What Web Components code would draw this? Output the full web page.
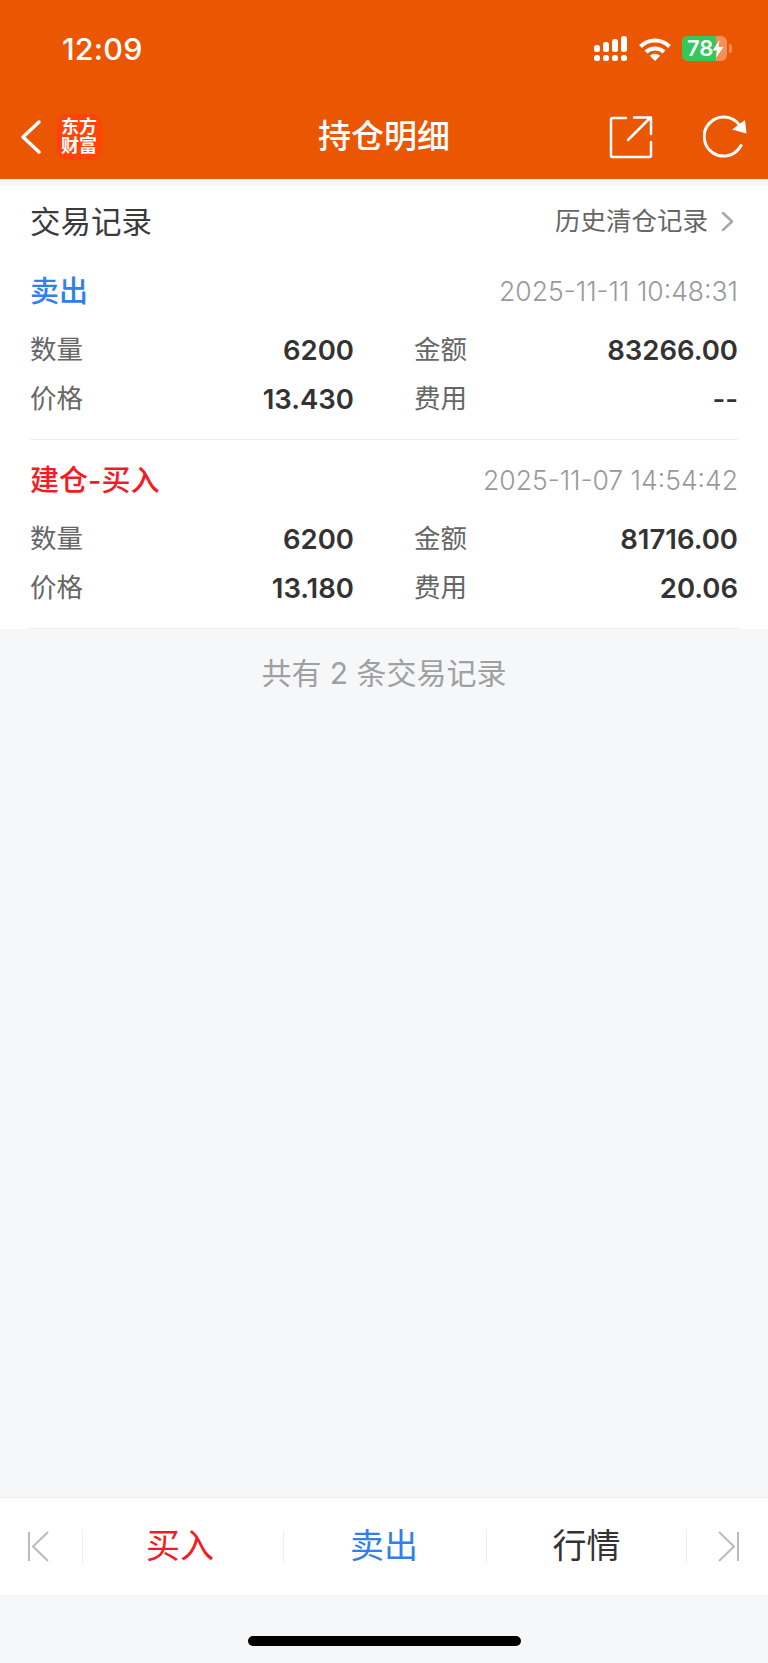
<!DOCTYPE html>
<html lang="zh">
<head>
<meta charset="utf-8">
<title>持仓明细</title>
<style>
html,body{margin:0;padding:0;}
body{width:768px;height:1663px;overflow:hidden;background:#f6f7f9;font-family:Inter,"Noto Sans CJK SC",sans-serif;}
app-page{height:1663px;}
</style>
</head>
<body>
<app-page>
	<app-header slot="header"></app-header>
	<trade-panel>
		<trade-item kind="sell" label="卖出" time="2025-11-11 10:48:31" qty="6200" amount="83266.00" price="13.430" fee="--"></trade-item>
		<trade-item kind="buy" label="建仓-买入" time="2025-11-07 14:54:42" qty="6200" amount="81716.00" price="13.180" fee="20.06"></trade-item>
	</trade-panel>
	<p class="count" slot="count">共有 2 条交易记录</p>
	<action-bar slot="bar"></action-bar>
</app-page>
<script>
const FONT = 'Inter,"Noto Sans CJK SC",sans-serif';
const CJK = '"Noto Sans CJK SC",sans-serif';

class AppPage extends HTMLElement{
	constructor(){
		super();
		let shadow = this.attachShadow({mode: 'open'});
		shadow.innerHTML = /*html*/`
		<style>
			:host{display:flex;flex-direction:column;background:#f6f7f9;font-family:${FONT};}
			.body{flex:1;padding-top:7px;}
			.home{height:68px;display:flex;justify-content:center;padding-top:41px;box-sizing:border-box;}
			.home i{display:block;width:273px;height:10px;border-radius:5px;background:#000;}
			::slotted(p){margin:0;height:84px;display:flex;align-items:center;justify-content:center;font:400 30px ${FONT};color:#a0a0a0;}
		</style>
		<slot name="header"></slot>
		<div class="body"><slot></slot><slot name="count"></slot></div>
		<slot name="bar"></slot>
		<div class="home"><i></i></div>`;
	}
}
customElements.define('app-page', AppPage);

class AppHeader extends HTMLElement{
	constructor(){
		super();
		let shadow = this.attachShadow({mode: 'open'});
		shadow.innerHTML = /*html*/`
		<style>
			:host{display:block;background:#eb5603;color:#fff;height:179px;font-family:${FONT};}
			.status{height:94px;display:flex;align-items:center;justify-content:space-between;padding:0 36px 0 62px;box-sizing:border-box;}
			.time{font:500 30.500px Inter,sans-serif;letter-spacing:.2px;padding-top:2px;}
			.icons{display:flex;align-items:center;gap:11px;padding-top:3px;}
			.nav{height:85px;display:flex;align-items:center;justify-content:space-between;padding:0 21px 0 20px;box-sizing:border-box;position:relative;}
			.left{display:flex;align-items:center;gap:14px;}
			.logo{width:46px;height:46px;border-radius:11px;background:#ff4408;display:flex;align-items:center;justify-content:center;padding-bottom:4px;box-sizing:border-box;}
			.logo span{display:block;width:37px;text-align:center;font:700 18px/19px ${CJK};}
			.title{position:absolute;left:0;right:0;top:0;height:79px;display:flex;align-items:center;justify-content:center;font:500 33px ${CJK};}
			.right{display:flex;align-items:center;gap:50px;position:relative;}
			svg{display:block;}
			.batt{position:relative;width:45px;height:25px;border-radius:6px;background:#f3905a;overflow:hidden;}
			.batt b{position:absolute;left:0;top:0;bottom:0;width:34px;background:#34c759;}
			.batt span{position:absolute;left:5px;top:0;font:600 22px/25px Inter,sans-serif;color:#fff;}
			.batt svg{position:absolute;left:30px;top:4px;}
			.cap{margin-left:-9px;width:3px;height:9px;background:#f3905a;border-radius:0 3px 3px 0;}
		</style>
		<div class="status">
			<span class="time">12:09</span>
			<div class="icons">
				<svg width="34" height="25" viewBox="0 0 34 25" fill="#fff">
					<rect x="0" y="9" width="6" height="7" rx="2.5"/><rect x="9" y="6" width="6" height="10" rx="2.5"/><rect x="18" y="3" width="6" height="13" rx="2.5"/><rect x="27" y="0" width="6" height="16" rx="2.5"/>
					<rect x="0" y="19" width="6" height="6" rx="2.5"/><rect x="9" y="19" width="6" height="6" rx="2.5"/><rect x="18" y="19" width="6" height="6" rx="2.5"/><rect x="27" y="19" width="6" height="6" rx="2.5"/>
				</svg>
				<svg width="32" height="24" viewBox="0 0 32 24" fill="none" stroke="#fff" stroke-width="4">
					<path d="M1.5 9.5C9.500 1.500 22.500 1.500 30.500 9.500"/>
					<path d="M7 15C12 10.200 20 10.200 25 15"/>
					<path d="M16 24L10.800 18.800C13.800 16 18.200 16 21.200 18.800Z" fill="#fff" stroke="none"/>
				</svg>
				<div class="batt"><b></b><span>78</span>
					<svg width="12" height="18" viewBox="0 0 12 18" fill="#fff"><path d="M7.500 0L0.500 10.500H5L3.800 18L11.500 7H6.500Z"/></svg>
				</div>
				<div class="cap"></div>
			</div>
		</div>
		<div class="nav">
			<div class="left">
				<svg width="22" height="36" viewBox="0 0 22 36" fill="none" stroke="#fff" stroke-width="3.500" stroke-linecap="round" stroke-linejoin="round"><path d="M19 3L3 18L19 33"/></svg>
				<div class="logo"><span>东方财富</span></div>
			</div>
			<div class="title">持仓明细</div>
			<div class="right">
				<svg width="44" height="44" viewBox="0 0 44 44" fill="none" stroke="#fff" stroke-width="2.500" stroke-linecap="round" stroke-linejoin="round">
					<path d="M17 3H3.500A1.500 1.500 0 0 0 2 4.500V40.500A1.500 1.500 0 0 0 3.500 42H40.500A1.500 1.500 0 0 0 42 40.500V27"/>
					<path d="M19 25L41 3M25 2.500H42V19"/>
				</svg>
				<svg width="44" height="44" viewBox="0 0 44 44" fill="none">
					<path d="M38 30.500A19.500 19.500 0 1 1 36 9.500" stroke="#fff" stroke-width="3" stroke-linecap="round"/>
					<path d="M43.500 18.500L29 14.500L42 5Z" fill="#fff"/>
				</svg>
			</div>
		</div>`;
	}
}
customElements.define('app-header', AppHeader);

class TradePanel extends HTMLElement{
	constructor(){
		super();
		let shadow = this.attachShadow({mode: 'open'});
		shadow.innerHTML = /*html*/`
		<style>
			:host{display:block;background:#fff;padding:0 30px;height:443px;box-sizing:border-box;overflow:hidden;font-family:${FONT};}
			.head{height:65px;padding-top:7px;box-sizing:border-box;display:flex;align-items:center;justify-content:space-between;}
			.head h2{margin:0;font:400 30.500px ${CJK};color:#3a3a3a;padding-bottom:5px;}
			.more{display:flex;align-items:center;gap:13px;font:400 25.500px ${CJK};color:#666;padding-bottom:7px;}
			.more svg{display:block;margin:5px 4px 0 0;}
			.list{display:flex;flex-direction:column;}
		</style>
		<div class="head">
			<h2>交易记录</h2>
			<div class="more">历史清仓记录
				<svg width="13" height="21" viewBox="0 0 13 21" fill="none" stroke="#a8a8a8" stroke-width="2.500" stroke-linecap="round" stroke-linejoin="round"><path d="M2 2L11 10.500L2 19"/></svg>
			</div>
		</div>
		<div class="list"><slot></slot></div>`;
	}
}
customElements.define('trade-panel', TradePanel);

class TradeItem extends HTMLElement{
	constructor(){
		super();
		let shadow = this.attachShadow({mode: 'open'});
		const a = n => this.getAttribute(n);
		shadow.innerHTML = /*html*/`
		<style>
			:host{display:block;height:189px;border-bottom:1px solid #eee;box-sizing:border-box;}
			.top{height:62px;margin-top:10px;display:flex;align-items:center;justify-content:space-between;}
			.kind{font:500 29px Inter,${CJK};padding-bottom:7px;}
			.sell .kind{color:#2f80ed;}
			.buy .kind{color:#f41c24;}
			.time{font:300 26.500px Inter,sans-serif;color:#999;padding-bottom:3px;}
			.grid{display:grid;grid-template-columns:324px 1fr;column-gap:60px;grid-auto-rows:49px;padding-top:2px;}
			.cell{display:flex;align-items:center;justify-content:space-between;}
			.cell span{font:400 26.500px ${CJK};color:#666;padding-bottom:4px;}
			.cell b{font:600 27.500px Inter,sans-serif;color:#333;}
		</style>
		<div class="${a('kind')}">
			<div class="top"><span class="kind">${a('label')}</span><span class="time">${a('time')}</span></div>
			<div class="grid">
				<div class="cell"><span>数量</span><b>${a('qty')}</b></div>
				<div class="cell"><span>金额</span><b>${a('amount')}</b></div>
				<div class="cell"><span>价格</span><b>${a('price')}</b></div>
				<div class="cell"><span>费用</span><b>${a('fee')}</b></div>
			</div>
		</div>`;
	}
}
customElements.define('trade-item', TradeItem);

class ActionBar extends HTMLElement{
	constructor(){
		super();
		let shadow = this.attachShadow({mode: 'open'});
		shadow.innerHTML = /*html*/`
		<style>
			:host{display:grid;grid-template-columns:82px 201px 203px 200px 82px;align-items:center;height:98px;background:#fff;border-top:1px solid #eee;box-sizing:border-box;font-family:${CJK};}
			div{height:33px;display:flex;align-items:center;justify-content:center;font:400 34px ${CJK};border-left:1px solid #eee;}
			div span{padding-bottom:6px;}
			.first{border-left:0;justify-content:flex-start;padding-left:27px;}
			.last{justify-content:flex-start;padding-left:31px;}
			.buy{color:#f41c24;padding-right:6px;}
			.sell{color:#2f80ed;padding-right:2px;}
			.quote{color:#333;}
			svg{display:block;}
		</style>
		<div class="first"><svg width="22" height="32" viewBox="0 0 22 32" fill="none" stroke="#bbb" stroke-width="2"><path d="M2 1V30M21 1L6 15.500L21 30"/></svg></div>
		<div class="buy"><span>买入</span></div>
		<div class="sell"><span>卖出</span></div>
		<div class="quote"><span>行情</span></div>
		<div class="last"><svg width="22" height="32" viewBox="0 0 22 32" fill="none" stroke="#bbb" stroke-width="2"><path d="M20 1V30M1 1L16 15.500L1 30"/></svg></div>`;
	}
}
customElements.define('action-bar', ActionBar);
</script>
</body>
</html>
